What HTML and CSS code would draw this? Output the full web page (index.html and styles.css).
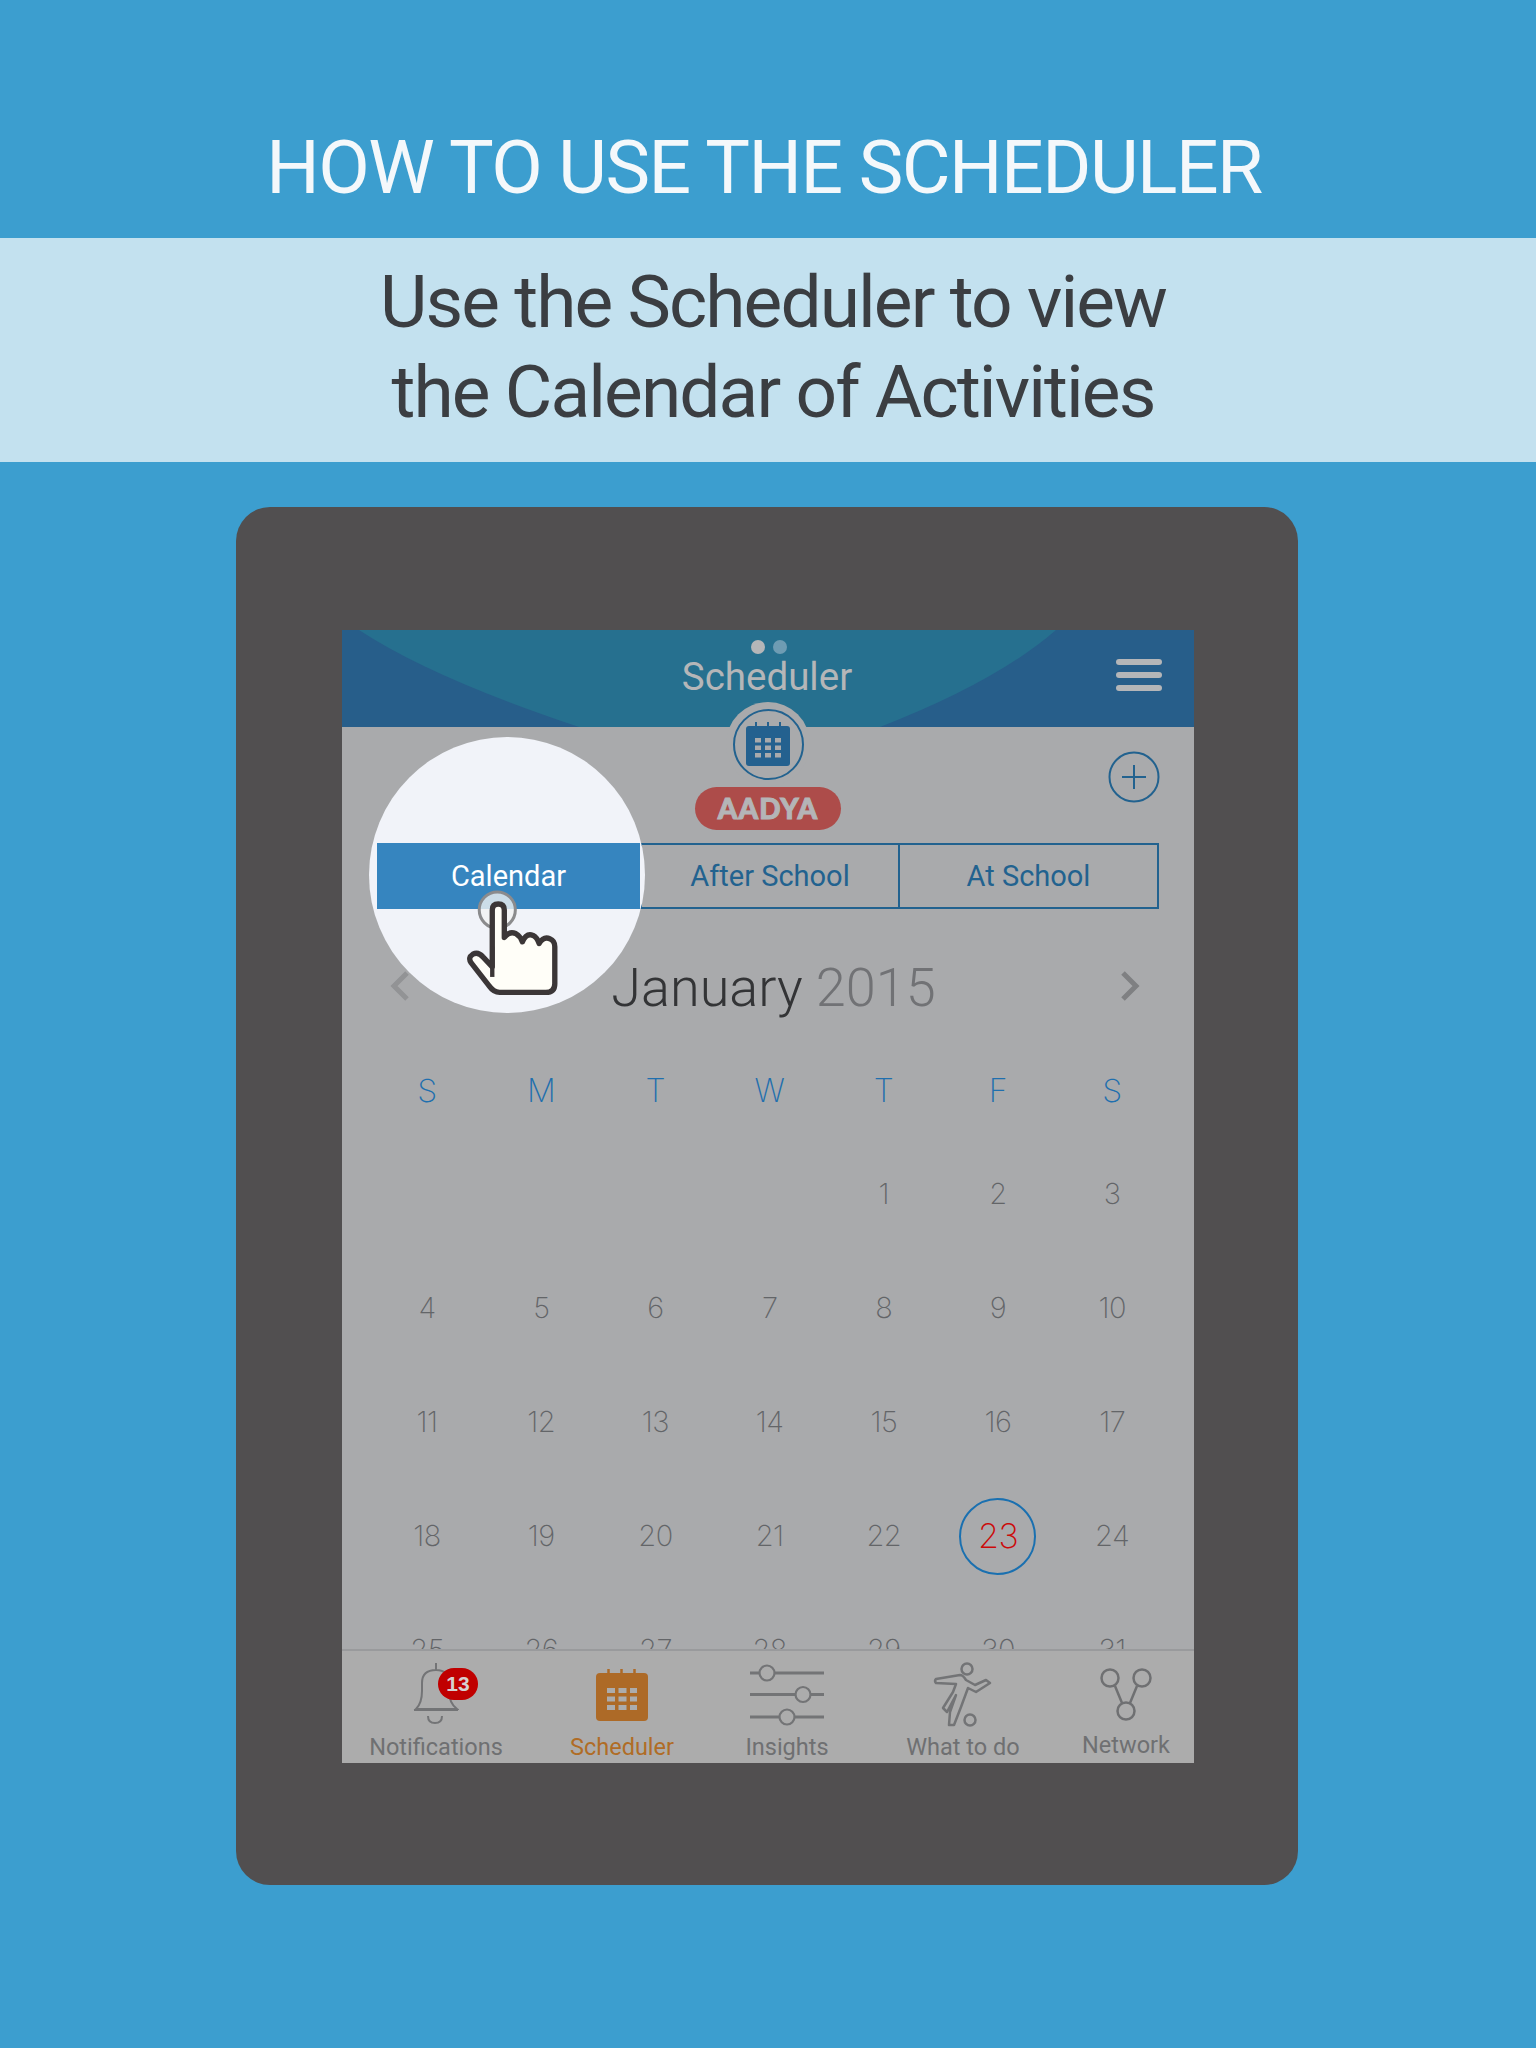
FILE: index.html
```html
<!DOCTYPE html>
<html lang="en">

<head>
    <meta charset="UTF-8">
    <title>How to use the Scheduler</title>
    <link rel="stylesheet" href="styles.css">
</head>

<body>
    <h1 class="page-title">HOW TO USE THE SCHEDULER</h1>
    <p class="page-band">Use the Scheduler to view<br>the Calendar of Activities</p>

    <div class="device">
        <div class="screen">
            <header class="app-header">
                <svg class="header-arc" viewBox="0 0 852 97" preserveAspectRatio="none">
                    <path d="M17 0Q90 48 237 97L538 97Q654 52 714 0Z" fill="#26708f" />
                </svg>
                <div class="pager"><span class="pager-dot"></span><span class="pager-dot pager-dot-off"></span></div>
                <div class="app-title">Scheduler</div>
                <div class="menu-icon"><span></span><span></span><span></span></div>
            </header>

            <!-- notch sits over the header edge -->
            <div class="notch">
                <div class="notch-ring">
                    <svg width="44" height="44" viewBox="0 0 44 44">
                        <path d="M3 4H41Q44 4 44 7V41Q44 44 41 44H3Q0 44 0 41V7Q0 4 3 4Z" fill="#24618f" />
                        <path d="M10 0V6M22 0V6M34 0V6" stroke="#24618f" stroke-width="2" />
                        <path d="M9 16h6v4.500h-6zM19 16h6v4.500h-6zM29 16h6v4.500h-6zM9 23.500h6v4.500h-6zM19 23.500h6v4.500h-6zM29 23.500h6v4.500h-6zM9 31h6v4.500h-6zM19 31h6v4.500h-6zM29 31h6v4.500h-6z" fill="#a9aaac" />
                    </svg>
                </div>
            </div>

            <div class="content">
                <div class="name-pill">AADYA</div>
                <svg class="add-btn" width="52" height="52" viewBox="0 0 52 52">
                    <circle cx="26" cy="26" r="24.500" fill="none" stroke="#22628f" stroke-width="2" />
                    <path d="M26 14V38M14 26H38" stroke="#22628f" stroke-width="2" />
                </svg>

                <div class="tabs">
                    <div class="tab tab-active">Calendar</div>
                    <div class="tab">After School</div>
                    <div class="tab">At School</div>
                </div>

                <div class="month-row">
                    <svg class="chevron" width="20" height="30" viewBox="0 0 20 30">
                        <path d="M17 2L4 15L17 28" fill="none" stroke="#929395" stroke-width="5" />
                    </svg>
                    <div class="month-name">January <span class="month-year">2015</span></div>
                    <svg class="chevron" width="20" height="30" viewBox="0 0 20 30">
                        <path d="M3 2L16 15L3 28" fill="none" stroke="#7f8082" stroke-width="5" />
                    </svg>
                </div>

                <div class="week-head">
                    <span>S</span><span>M</span><span>T</span><span>W</span><span>T</span><span>F</span><span>S</span>
                </div>

                <div class="days">
                    <span class="first-day">1</span><span>2</span><span>3</span>
                    <span>4</span><span>5</span><span>6</span><span>7</span><span>8</span><span>9</span><span>10</span>
                    <span>11</span><span>12</span><span>13</span><span>14</span><span>15</span><span>16</span><span>17</span>
                    <span>18</span><span>19</span><span>20</span><span>21</span><span>22</span><span class="today">23</span><span>24</span>
                    <span>25</span><span>26</span><span>27</span><span>28</span><span>29</span><span>30</span><span>31</span>
                </div>
            </div>

            <nav class="bottom-nav">
                <div class="nav-item">
                    <div class="nav-icon nav-icon-bell">
                        <svg width="46" height="62" viewBox="0 0 46 62">
                            <path d="M23 0V7M3 46Q9 40 9 28V20Q9 7 23 7Q36 7 36 20V28Q36 40 44 46ZM1 47H45M15 53Q15 60 22 60Q29 60 29 53" fill="none" stroke="#737476" stroke-width="2" />
                        </svg>
                        <span class="nav-badge">13</span>
                    </div>
                    <span class="nav-label">Notifications</span>
                </div>
                <div class="nav-item nav-item-active">
                    <div class="nav-icon">
                        <svg width="52" height="52" viewBox="0 0 52 52">
                            <path d="M4 4H48Q52 4 52 8V48Q52 52 48 52H4Q0 52 0 48V8Q0 4 4 4Z" fill="#ad6a27" />
                            <path d="M12.500 0V6M25.500 0V6M38.500 0V6" stroke="#ad6a27" stroke-width="2.500" />
                            <path d="M11 19h8v5h-8zM22.500 19h8v5h-8zM34 19h7v5h-7zM11 27.500h8v5h-8zM22.500 27.500h8v5h-8zM34 27.500h7v5h-7zM11 36h8v5h-8zM22.500 36h8v5h-8zM34 36h7v5h-7z" fill="#acacac" />
                        </svg>
                    </div>
                    <span class="nav-label">Scheduler</span>
                </div>
                <div class="nav-item">
                    <div class="nav-icon">
                        <svg width="74" height="64" viewBox="0 0 74 64">
                            <path d="M0 10H74M0 31.500H74M0 54H74" fill="none" stroke="#737476" stroke-width="3" />
                            <g fill="#acacac" stroke="#737476" stroke-width="2.200">
                                <circle cx="17" cy="10" r="7.500" />
                                <circle cx="53" cy="31.500" r="7.500" />
                                <circle cx="37" cy="54" r="7.500" />
                            </g>
                        </svg>
                    </div>
                    <span class="nav-label">Insights</span>
                </div>
                <div class="nav-item">
                    <div class="nav-icon">
                        <svg width="60" height="66" viewBox="0 0 60 66">
                            <g fill="none" stroke="#737476" stroke-width="2.500" stroke-linejoin="round">
                                <circle cx="34" cy="7" r="5.500" />
                                <path d="M3 21L23 22L20 30L10 46L14 50L23 33L17 50L16 63L21 63L28 45L35 26L43 30L57 21L53 18L42 23L33 18Q30 13 27 13L3 17Q1 19 3 21Z" />
                                <circle cx="37" cy="58" r="5.500" />
                            </g>
                        </svg>
                    </div>
                    <span class="nav-label">What to do</span>
                </div>
                <div class="nav-item">
                    <div class="nav-icon">
                        <svg width="52" height="54" viewBox="0 0 52 54">
                            <g fill="none" stroke="#6f7072" stroke-width="2.500">
                                <circle cx="10" cy="10" r="8.500" />
                                <circle cx="42" cy="10" r="8.500" />
                                <circle cx="26" cy="43" r="8.500" />
                                <path d="M15 18L22 35M37 18L30 35" />
                            </g>
                        </svg>
                    </div>
                    <span class="nav-label nav-label-up">Network</span>
                </div>
            </nav>

            <!-- spotlight on the first tab -->
            <div class="spotlight">
                <div class="spot-tab">Calendar</div>
            </div>
            <svg class="hand" width="94" height="107" viewBox="320 180 280 320">
                <circle cx="413" cy="240" r="54" fill="#f2f2f2" fill-opacity="0.8" stroke="#8b8b8d" stroke-width="9" />
                <path d="M398 240Q398 222 416 222Q434 222 434 240V322Q448 302 468 310Q482 318 488 335Q500 308 520 316Q532 322 538 340Q552 318 570 326Q585 332 585 350V460Q585 486 558 486H420Q402 486 388 466L335 398Q324 382 340 372Q356 364 370 380L398 410Z" fill="#fffef8" stroke="#3b3637" stroke-width="16" stroke-linejoin="round" />
                <path d="M398 350V440" stroke="#3b3637" stroke-width="13" />
            </svg>
        </div>
    </div>
</body>

</html>
```
FILE: styles.css
```css
* {
    box-sizing: border-box;
}

body {
    margin: 0;
    width: 1536px;
    height: 2048px;
    background-color: #3c9ecf;
    font-family: Roboto, sans-serif;
    overflow: hidden;
}

.page-title {
    margin: 0;
    height: 238px;
    padding: 122px 8px 0 0;
    text-align: center;
    color: #f4f8fb;
    font-size: 75px;
    letter-spacing: -1.500px;
    line-height: 90px;
    font-weight: 400;
}

.page-band {
    margin: 0;
    height: 224px;
    padding: 19px 0 0 10px;
    background-color: #c3e1ef;
    text-align: center;
    color: #3b3e42;
    font-size: 73px;
    letter-spacing: -1.900px;
    line-height: 90px;
}

.device {
    width: 1062px;
    height: 1378px;
    margin: 45px 0 0 236px;
    padding: 123px 104px 0 106px;
    background-color: #514f50;
    border-radius: 34px;
}

.screen {
    position: relative;
    display: flex;
    flex-direction: column;
    width: 852px;
    height: 1133px;
    background-color: #a9aaac;
}

.app-header {
    position: relative;
    flex: none;
    height: 97px;
    background-color: #275e8a;
    text-align: center;
}

.header-arc {
    position: absolute;
    left: 0;
    top: 0;
    width: 100%;
    height: 100%;
}

.pager {
    position: relative;
    display: flex;
    justify-content: center;
    gap: 8px;
    padding: 10px 0 0 2px;
}

.pager-dot {
    width: 14px;
    height: 14px;
    border-radius: 50%;
    background-color: #b5b6b8;
}

.pager-dot-off {
    background-color: #6f9cb3;
}

.app-title {
    position: relative;
    margin-left: -2px;
    color: #b5b6b8;
    font-size: 38.500px;
    line-height: 46px;
}

.menu-icon {
    position: absolute;
    right: 32px;
    top: 29px;
    display: flex;
    flex-direction: column;
    gap: 7px;
}

.menu-icon span {
    display: block;
    width: 46px;
    height: 6px;
    border-radius: 3px;
    background-color: #b5b6b8;
}

.notch {
    position: absolute;
    left: 384px;
    top: 72px;
    display: flex;
    align-items: center;
    justify-content: center;
    width: 84px;
    height: 84px;
    border-radius: 50%;
    background-color: #a9aaac;
}

.notch-ring {
    display: flex;
    align-items: center;
    justify-content: center;
    width: 71px;
    height: 71px;
    border: 2.500px solid #22628f;
    border-radius: 50%;
}

.content {
    position: relative;
    flex: 1;
    min-height: 0;
    overflow: hidden;
    padding-top: 60px;
}

.name-pill {
    width: 146px;
    height: 43px;
    margin: 0 auto;
    border-radius: 22px;
    background-color: #ad4c4a;
    color: #b4b5b7;
    text-align: center;
    font-family: Lato, sans-serif;
    font-size: 28px;
    font-weight: 900;
    letter-spacing: 1px;
    line-height: 43px;
    -webkit-text-stroke: 1px #b4b5b7;
}

.add-btn {
    position: absolute;
    right: 34px;
    top: 24px;
}

.tabs {
    display: grid;
    grid-template-columns: 261px 258px 259px;
    width: 782px;
    height: 66px;
    margin: 13px 0 0 35px;
    border: 2px solid #22628f;
}

.tab {
    border-left: 2px solid #22628f;
    color: #22628f;
    text-align: center;
    font-size: 29px;
    line-height: 62px;
}

.tab:first-child {
    border-left: none;
}

.month-row {
    display: flex;
    align-items: center;
    justify-content: space-between;
    height: 70px;
    margin-top: 44px;
    padding: 0 54px 0 48px;
}

.month-name {
    margin-left: 17px;
    color: #333436;
    font-size: 54px;
    font-weight: 300;
    line-height: 70px;
}

.month-year {
    color: #717275;
}

.chevron {
    margin-bottom: 4px;
}

.week-head,
.days {
    display: grid;
    grid-template-columns: repeat(7, 114.200px);
    margin-left: 28px;
    text-align: center;
    font-family: Inter, sans-serif;
    font-weight: 200;
}

.week-head {
    height: 90px;
    margin-top: 24px;
    color: #1f6fae;
    font-size: 32px;
    line-height: 88px;
}

.days {
    grid-auto-rows: 114px;
    color: #636568;
    font-size: 29px;
    letter-spacing: -0.500px;
    line-height: 114px;
}

.first-day {
    grid-column-start: 5;
}

.today {
    position: relative;
    color: #cc0a0a;
    font-size: 34px;
}

.today::before {
    content: "";
    box-sizing: border-box;
    position: absolute;
    left: 18.500px;
    top: 19px;
    width: 77px;
    height: 77px;
    border: 2px solid #1a70b0;
    border-radius: 50%;
}

.bottom-nav {
    flex: none;
    display: grid;
    grid-template-columns: 188px 184px 146px 206px 120px;
    height: 114px;
    border-top: 2px solid #999a9c;
    background-color: #acacac;
}

.nav-item {
    display: flex;
    flex-direction: column;
    align-items: center;
    color: #6f7072;
    font-size: 23.500px;
}

.nav-item-active {
    color: #b06c26;
}

.nav-icon {
    position: relative;
    display: flex;
    align-items: center;
    justify-content: center;
    height: 83px;
    padding-top: 5px;
}

.nav-icon-bell {
    margin-top: -3px;
    height: 86px;
}

.nav-label {
    line-height: 26px;
}

.nav-label-up {
    margin-top: -2px;
}

.nav-badge {
    position: absolute;
    left: 25px;
    top: 20px;
    width: 40px;
    height: 32px;
    border-radius: 16px;
    background-color: #c00000;
    color: #d6d0d0;
    text-align: center;
    font-family: "Liberation Sans", sans-serif;
    font-size: 21px;
    font-weight: 700;
    line-height: 32px;
}

.spotlight {
    position: absolute;
    left: 27px;
    top: 107px;
    width: 276px;
    height: 276px;
    border-radius: 50%;
    background-color: #f1f3f9;
}

.spot-tab {
    position: absolute;
    left: 8px;
    top: 106px;
    width: 263px;
    height: 66px;
    background-color: #3685bf;
    color: #fff;
    text-align: center;
    font-size: 29px;
    line-height: 66px;
}

.hand {
    position: absolute;
    left: 124px;
    top: 260px;
}
```
